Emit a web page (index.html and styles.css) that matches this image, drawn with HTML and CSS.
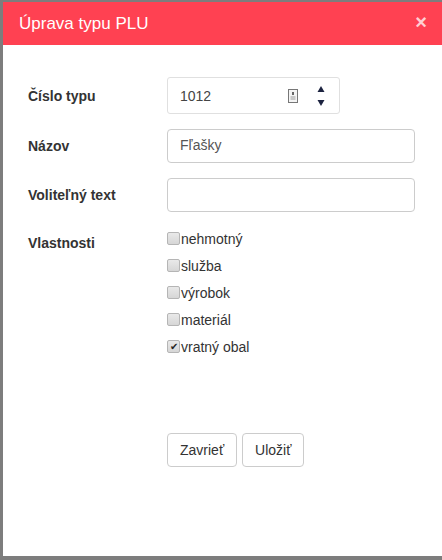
FILE: index.html
```html
<!DOCTYPE html>
<html lang="sk">
<head>
  <meta charset="UTF-8" />
  <meta name="viewport" content="width=device-width, initial-scale=1.0"/>
  <title>Úprava typu PLU</title>
  <link rel="stylesheet" href="styles.css">
</head>
<body>

<div class="modal">
  <div class="modal-header">
    <span class="modal-title">Úprava typu PLU</span>
    <span class="close">&times;</span>
  </div>

  <div class="modal-body">
    <div class="form-row">
      <label>Číslo typu</label>
      <div class="number-input">
        <span class="value">1012</span>
        <svg class="ext-icon" width="10" height="14" viewBox="0 0 10 14">
          <rect x="0.5" y="0.5" width="9" height="13" fill="#f4f4f4" stroke="#777"/>
          <rect x="4" y="3" width="2" height="3" fill="#666"/>
          <rect x="2.5" y="7.5" width="5" height="1" fill="#999"/>
          <rect x="2.5" y="9.5" width="5" height="1" fill="#999"/>
        </svg>
        <span class="spin">
          <svg width="8" height="6" viewBox="0 0 8 6"><path d="M4 0 L7.5 6 L0.5 6 Z" fill="#1c2340"/></svg>
          <svg width="8" height="6" viewBox="0 0 8 6"><path d="M0.5 0 L7.5 0 L4 6 Z" fill="#1c2340"/></svg>
        </span>
      </div>
    </div>

    <div class="form-row">
      <label>Názov</label>
      <div class="text-input">Fľašky</div>
    </div>

    <div class="form-row">
      <label>Voliteľný text</label>
      <div class="text-input"></div>
    </div>

    <div class="form-row top">
      <label>Vlastnosti</label>
      <div class="checks">
        <div class="check"><span class="box"></span>nehmotný</div>
        <div class="check"><span class="box"></span>služba</div>
        <div class="check"><span class="box"></span>výrobok</div>
        <div class="check"><span class="box"></span>materiál</div>
        <div class="check"><span class="box checked">&#10004;</span>vratný obal</div>
      </div>
    </div>

    <div class="buttons">
      <button class="btn">Zavrieť</button>
      <button class="btn">Uložiť</button>
    </div>
  </div>
</div>

</body>
</html>
```

FILE: styles.css
```css
body {
  font-family: 'Liberation Sans', Arial, sans-serif;
  font-size: 14px;
  color: #333;
  background: #7d7d7d;
  margin: 0;
  padding: 0;
  height: 560px;
  overflow: hidden;
}

.modal {
  background: white;
  margin: 2px 0 0 3px;
  height: 554px;
}

.modal-header {
  background: #ff4152;
  color: white;
  height: 43px;
  display: flex;
  align-items: center;
  justify-content: space-between;
  padding: 0 15px 0 16px;
}

.modal-title {
  font-size: 17px;
}

.close {
  font-size: 20px;
  font-weight: bold;
  color: rgba(255,255,255,0.75);
  margin-top: -2px;
}

.modal-body {
  padding: 32px 27px 0 25px;
}

.form-row {
  display: grid;
  grid-template-columns: 139px 1fr;
  align-items: center;
  margin-bottom: 15px;
}

.form-row label {
  font-weight: bold;
}

.form-row.top {
  align-items: start;
}

.form-row.top label {
  padding-top: 8px;
}

.number-input {
  width: 173px;
  height: 37px;
  box-sizing: border-box;
  border: 1px solid #e0e0e0;
  border-radius: 3px;
  display: flex;
  align-items: center;
  padding-left: 12px;
  color: #444;
}

.number-input .value {
  flex: 1;
}

.ext-icon {
  margin-right: 19px;
  margin-top: 1px;
}

.spin {
  display: flex;
  flex-direction: column;
  gap: 8px;
  margin-right: 14px;
}

.spin svg {
  display: block;
}

.text-input {
  height: 34px;
  box-sizing: border-box;
  border: 1px solid #ccc;
  border-radius: 4px;
  padding: 7px 12px;
  color: #555;
}

.checks {
  display: flex;
  flex-direction: column;
  margin-top: -2px;
}

.check {
  height: 27px;
  display: flex;
  align-items: center;
}

.box {
  width: 11px;
  height: 11px;
  border: 1px solid #b5b5b5;
  border-radius: 2px;
  background: linear-gradient(#e9e9e9, #d6d6d6);
  margin-right: 1px;
  font-size: 10px;
  line-height: 11px;
  text-align: center;
  color: #222;
}

.buttons {
  margin-top: 73px;
  padding-left: 139px;
}

.btn {
  font-family: 'Liberation Sans', Arial, sans-serif;
  font-size: 14px;
  color: #333;
  background: white;
  border: 1px solid #ccc;
  border-radius: 4px;
  padding: 7px 12px;
  height: 34px;
  margin-right: 1px;
}
```
